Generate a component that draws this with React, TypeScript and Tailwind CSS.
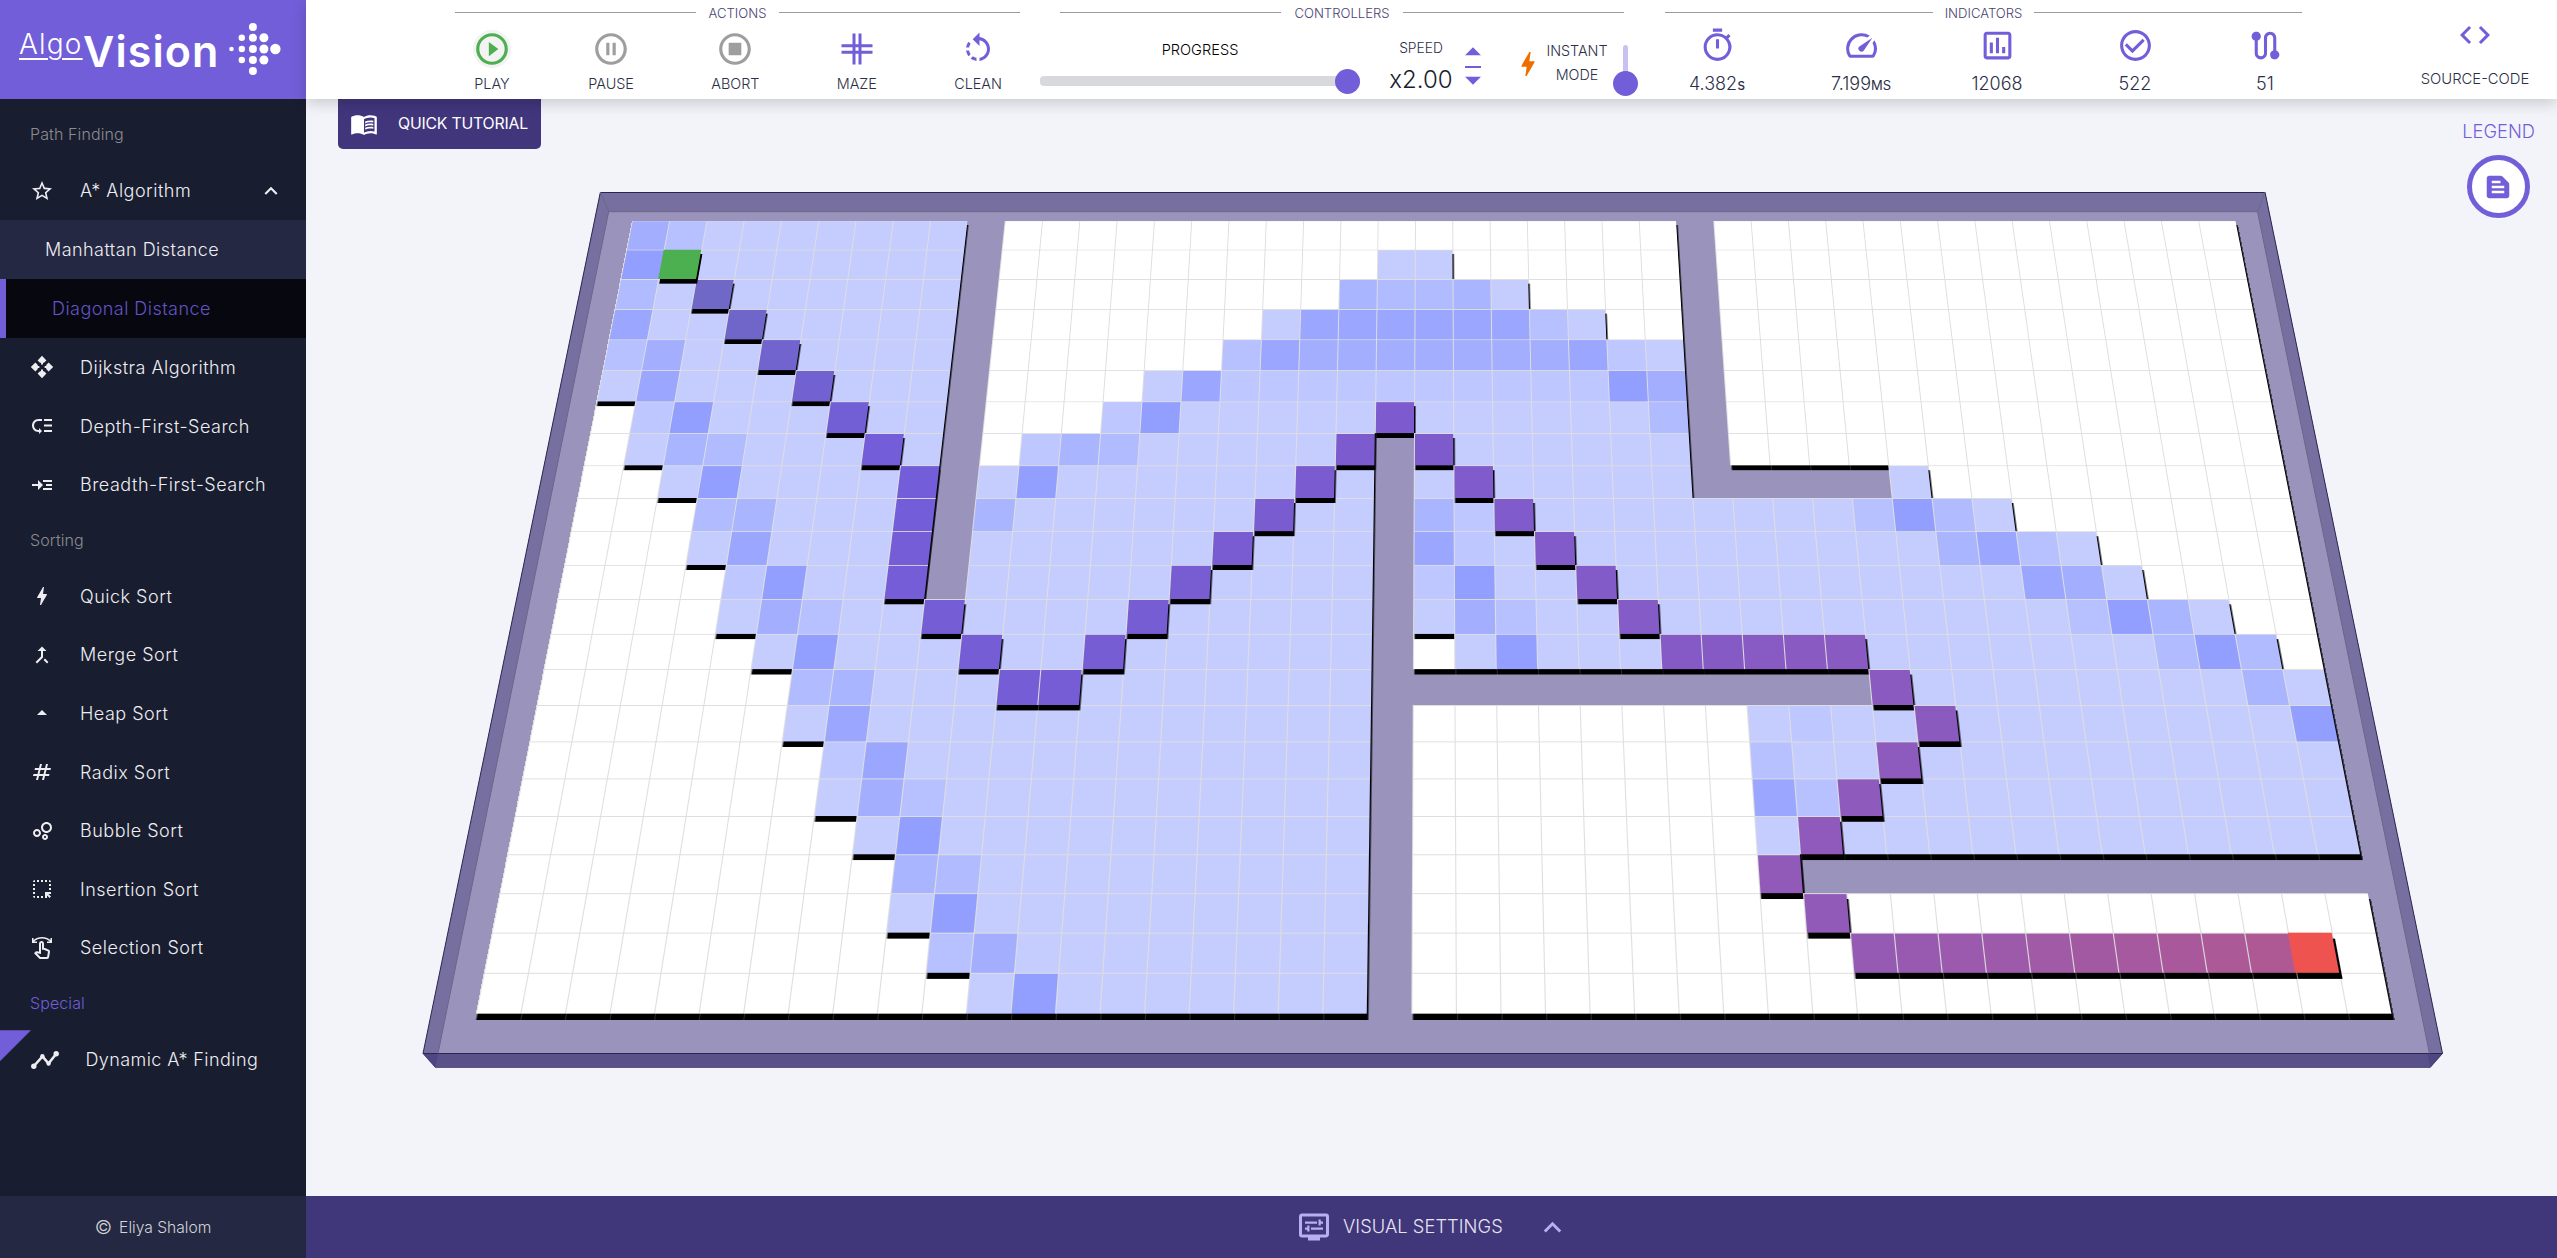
import type { CSSProperties, ReactNode } from "react";
import type { IconType } from "react-icons";
import {
  MdArrowDropDown,
  MdArrowDropUp,
  MdBolt,
  MdCallMerge,
  MdCheckCircleOutline,
  MdCode,
  MdExpandLess,
  MdHighlightAlt,
  MdLowPriority,
  MdMenuBook,
  MdNumbers,
  MdOutlineAssessment,
  MdOutlineBubbleChart,
  MdOutlineDisplaySettings,
  MdOutlineStopCircle,
  MdOutlineSwipe,
  MdOutlineTimer,
  MdPauseCircleOutline,
  MdPlayCircleOutline,
  MdReadMore,
  MdRotateLeft,
  MdRoute,
  MdSpeed,
  MdStarBorder,
  MdTextSnippet,
} from "react-icons/md";

/* ---------- board data ---------- */

// Each row is a run-length list: "#" wall, "." free, "a".."h" visited shades.
const ROWS = [
  "f1 c1 a7 #1 .18 #1 .14",
  "h1 a8 #1 .10 a2 .6 #1 .14",
  "d1 a8 #1 .9 e1 d2 e1 a1 .4 #1 .14",
  "g1 a8 #1 .7 a1 g6 c1 a1 .2 #1 .14",
  "c1 f1 a7 #1 .6 c1 g1 f7 g1 b1 a1 #1 .14",
  "a1 g1 a7 #1 .4 a1 g1 b10 h1 f1 #1 .14",
  ".1 b1 h1 a6 #1 .3 b1 h1 a12 d1 #1 .14",
  ".1 a1 e1 d1 a5 #1 .1 b1 e1 d1 a6 #1 a7 #1 .14",
  ".2 a1 h1 a5 #1 a1 h1 a8 #1 a7 #5 a1 .9",
  ".3 d1 e1 a4 #1 e1 a9 #1 e1 b1 a9 c1 h1 d1 a1 .7",
  ".3 a1 g1 a4 #1 a10 #1 g1 b1 a11 e1 g1 c1 a1 .5",
  ".4 b1 h1 a3 #1 a10 #1 b1 h1 a13 g1 f1 a1 .4",
  ".4 a1 f1 c1 a13 #1 a1 f1 c1 a13 c1 h1 e1 a1 .2",
  ".5 a1 h1 a13 #1 .1 a1 h1 a15 d1 h1 d1 .1",
  ".6 d1 e1 a12 #12 a9 e1 a1",
  ".6 a1 g1 a12 #1 .8 a1 b1 a11 h1",
  ".7 b1 g1 a11 #1 .8 c1 a13",
  ".7 a1 f1 c1 a10 #1 .8 g1 c1 a12",
  ".8 a1 h1 a10 #1 .8 a14",
  ".9 e1 d1 a9 #1 .8 a1 #13",
  ".9 a1 h1 a9 #1 .22",
  ".10 c1 f1 a8 #1 .22",
  ".11 a1 h1 a7 #1 .22",
];

const SHADES: Record<string, string> = {
  a: "bg-[#c5cdff]",
  b: "bg-[#bec7ff]",
  c: "bg-[#b8c1ff]",
  d: "bg-[#b1bbff]",
  e: "bg-[#aab5ff]",
  f: "bg-[#a3aeff]",
  g: "bg-[#9ba7ff]",
  h: "bg-[#929fff]",
};

const PATH: [number, number][] = [
  [2, 2], [3, 3], [4, 4], [5, 5], [6, 6], [7, 7], [8, 8], [9, 8], [10, 8], [11, 8],
  [12, 9], [13, 10], [14, 11], [14, 12], [13, 13], [12, 14], [11, 15], [10, 16],
  [9, 17], [8, 18], [7, 19], [6, 20], [7, 21], [8, 22], [9, 23], [10, 24], [11, 25],
  [12, 26], [13, 27], [13, 28], [13, 29], [13, 30], [13, 31], [14, 32], [15, 33],
  [16, 32], [17, 31], [18, 30], [19, 29], [20, 30], [21, 31], [21, 32], [21, 33],
  [21, 34], [21, 35], [21, 36], [21, 37], [21, 38], [21, 39], [21, 40],
];

const STOPS: [number, [number, number, number]][] = [
  [0, [111, 104, 198]],
  [5, [115, 93, 217]],
  [14, [118, 93, 212]],
  [21, [125, 91, 206]],
  [33, [138, 90, 192]],
  [39, [146, 90, 184]],
  [49, [175, 89, 148]],
];

function pathColor(i: number) {
  const k = Math.max(1, STOPS.findIndex(([s]) => s >= i));
  const [s0, c0] = STOPS[k - 1];
  const [s1, c1] = STOPS[k];
  const t = (i - s0) / (s1 - s0);
  return `rgb(${c0.map((v, j) => Math.round(v + (c1[j] - v) * t)).join(",")})`;
}

type Cell = { row: number; col: number; kind: string };

const CELLS: Cell[] = ROWS.flatMap((line, row) => {
  let col = 0;
  return line.split(" ").flatMap((run) =>
    Array.from({ length: Number(run.slice(1)) }, () => ({ row, col: col++, kind: run[0] }))
  );
});

const place = (row: number, col: number): CSSProperties => ({
  gridRow: row + 1,
  gridColumn: col + 1,
});

const CELL = "border-t border-l border-[#dedede] shadow-[1.5px_6px_0_0_#000]";

function Board() {
  const free = CELLS.filter((c) => c.kind === ".");
  const visited = CELLS.filter((c) => c.kind !== "." && c.kind !== "#");
  return (
    <div className="absolute inset-0 overflow-hidden">
      <svg className="absolute inset-0 h-full w-full" viewBox="0 0 2251 1097">
        <polygon points="294.3,93 1959.1,93 2136.5,954.5 117,954.5" fill="#776fa0" />
        <polygon points="302.7,112.7 1951.5,112.7 2123.5,954.5 132,954.5" fill="#9a94bc" />
        <polygon points="117,954.5 2136.5,954.5 2124.2,968.5 129.4,968.5" fill="#5a518b" />
        <polygon points="117,954.5 132,954.5 129.4,968.5" fill="#4e4583" />
        <polygon points="2136.5,954.5 2121.5,954.5 2124.2,968.5" fill="#4e4583" />
        <g fill="none" stroke="#2b2650">
          <path d="M117,954.5 L294.3,93.5 H1959.1 L2136.5,954.5" />
          <path d="M117,954.5 H2136.5" />
          <path d="M117,954.5 L129.4,968.5 H2124.2 L2136.5,954.5" strokeOpacity="0.6" />
          <path
            d="M294.3,93 L302.7,112.7 H1951.5 L1959.1,93 M302.7,112.7 L132,954.5 M1951.5,112.7 L2123.5,954.5"
            stroke="#6b6788"
          />
        </g>
      </svg>
      <div className="absolute top-0 left-0 grid origin-top-left grid-cols-[repeat(43,40px)] grid-rows-[repeat(23,40px)] [transform:matrix3d(0.93225,0,0,0,-0.1998,0.7,0,-0.00017715,0,0,1,0,325.9,121.6,0,1)]">
        {free.map((c) => (
          <div key={`f${c.row}-${c.col}`} className={`${CELL} bg-white`} style={place(c.row, c.col)} />
        ))}
        {visited.map((c) => (
          <div key={`v${c.row}-${c.col}`} className={`${CELL} ${SHADES[c.kind]}`} style={place(c.row, c.col)} />
        ))}
        {PATH.map(([r, c], i) => (
          <div
            key={`p${r}-${c}`}
            className={CELL}
            style={{ ...place(r, c), backgroundColor: pathColor(i) }}
          />
        ))}
        <div className="bg-[#4caf50] shadow-[2px_6px_0_0_#000]" style={place(1, 1)} />
        <div className="bg-[#ef5350] shadow-[2px_6px_0_0_#000]" style={place(21, 41)} />
      </div>
    </div>
  );
}

/* ---------- icons ---------- */

function DijkstraIcon() {
  return (
    <svg className="h-6 w-6" viewBox="0 0 24 24" fill="currentColor">
      <path d="M12 .8 16.4 5.4 14 7.8H13V9.4H11V7.8H10L7.6 5.4zM12 23.2 16.4 18.6 14 16.2H13V14.6H11V16.2H10L7.6 18.6zM.8 12 5.4 7.6 7.8 10V11H9.4V13H7.8V14L5.4 16.4zM23.2 12 18.6 7.6 16.2 10V11H14.6V13H16.2V14L18.6 16.4z" />
    </svg>
  );
}

function DynamicIcon() {
  return (
    <svg className="mr-[26px] h-[30px] w-[30px]" viewBox="0 0 30 30" fill="currentColor">
      <path d="M3.5 21.5 12.5 11.5 18.5 18.5 26.5 8.5" fill="none" stroke="currentColor" strokeWidth="2.6" />
      <circle cx="3.8" cy="21.3" r="2.7" />
      <circle cx="12.4" cy="11.3" r="2.2" />
      <circle cx="18.6" cy="18.6" r="2.2" />
      <circle cx="26.2" cy="8.8" r="2.7" />
    </svg>
  );
}

function MazeIcon() {
  return (
    <svg className="h-[38px] w-[38px]" viewBox="0 0 38 38" stroke="currentColor" strokeWidth="3">
      <path d="M3.5 15.8H34.5M3.5 22.2H34.5M16 3.5V34.5M22 3.5V34.5" />
    </svg>
  );
}

const DOTS = [
  [2.5, 28, 2.3], [12.8, 28, 3.2], [23.9, 28, 4], [34.9, 28, 4.5], [46.4, 28, 5.2],
  [12.8, 16.8, 3.2], [23.9, 16.8, 4], [34.9, 16.8, 4.5],
  [12.8, 39, 3.2], [23.9, 39, 4], [34.9, 39, 4.5],
  [23.9, 6, 4], [23.9, 50, 4],
];

function LogoMark() {
  return (
    <svg className="-mt-px h-[56px] w-[52px] shrink-0" viewBox="0 0 52 56" fill="#fff">
      {DOTS.map(([x, y, r]) => (
        <circle key={`${x}-${y}`} cx={x} cy={y} r={r} />
      ))}
    </svg>
  );
}

/* ---------- sidebar ---------- */

function NavHeading({ children, className }: { children: ReactNode; className: string }) {
  return <div className={`flex shrink-0 items-center pl-[30px] tracking-[0.1px] ${className}`}>{children}</div>;
}

function NavItem({ icon, label, trailing }: { icon: ReactNode; label: string; trailing?: ReactNode }) {
  return (
    <div className="flex h-[58.6px] shrink-0 items-center pl-[30px] text-[18px] tracking-[0.5px]">
      <span className="flex w-[50px] shrink-0 items-center">{icon}</span>
      <span className="flex-1">{label}</span>
      {trailing}
    </div>
  );
}

function Sidebar() {
  return (
    <aside className="flex w-[306px] shrink-0 flex-col bg-[#181d2f] text-[#eeeef2]">
      <div className="flex h-[99px] shrink-0 items-center bg-[#725ed9] pl-[19px] text-white">
        <span className="-mt-[11px] w-[64px] text-[28px] leading-none font-light tracking-[1.2px] underline decoration-2 underline-offset-[4px]">
          Algo
        </span>
        <span className="mt-1 w-[146px] text-[43px] leading-none font-semibold tracking-[1.1px]">Vision</span>
        <LogoMark />
      </div>
      <NavHeading className="mt-[9px] h-[53.6px] pb-px text-[#8b8c92]">Path Finding</NavHeading>
      <NavItem
        icon={<MdStarBorder size={24} />}
        label="A* Algorithm"
        trailing={<MdExpandLess size={26} className="mr-[22px]" />}
      />
      <div className="flex h-[59px] shrink-0 items-center bg-[#242842] pl-[45px] text-[18px] tracking-[0.45px]">
        Manhattan Distance
      </div>
      <div className="flex h-[59px] shrink-0 items-center border-l-[6px] border-[#725ed9] bg-[#07080f] pl-[46px] text-[18px] tracking-[0.45px] text-[#6553c7]">
        Diagonal Distance
      </div>
      <NavItem icon={<DijkstraIcon />} label="Dijkstra Algorithm" />
      <NavItem icon={<MdLowPriority size={24} />} label="Depth-First-Search" />
      <NavItem icon={<MdReadMore size={24} />} label="Breadth-First-Search" />
      <NavHeading className="h-[53px] pb-px text-[#8b8c92]">Sorting</NavHeading>
      <NavItem icon={<MdBolt size={24} />} label="Quick Sort" />
      <NavItem icon={<MdCallMerge size={24} />} label="Merge Sort" />
      <NavItem icon={<MdArrowDropUp size={24} />} label="Heap Sort" />
      <NavItem icon={<MdNumbers size={24} />} label="Radix Sort" />
      <NavItem icon={<MdOutlineBubbleChart size={24} />} label="Bubble Sort" />
      <NavItem icon={<MdHighlightAlt size={24} />} label="Insertion Sort" />
      <NavItem icon={<MdOutlineSwipe size={24} />} label="Selection Sort" />
      <NavHeading className="h-[53px] pb-px text-[#725ed9]">Special</NavHeading>
      <div className="relative flex h-[59px] shrink-0 items-center pl-[29.5px] text-[18px] tracking-[0.42px]">
        <div className="absolute top-0 left-0 h-[31px] w-[31px] bg-[#725ed9] [clip-path:polygon(0_0,100%_0,0_100%)]" />
        <DynamicIcon />
        Dynamic A* Finding
      </div>
      <div className="mt-auto flex h-[62px] shrink-0 items-center justify-center gap-[7px] bg-[#242842] pt-px text-[#d3d4d9]">
        <span className="text-[19px] leading-none">©</span>
        <span className="text-[15.6px]">Eliya Shalom</span>
      </div>
    </aside>
  );
}

/* ---------- toolbar ---------- */

function GroupTitle({ children, gap }: { children: string; gap: string }) {
  return (
    <div className={`flex h-[25px] items-center text-[13.1px] text-[#4a4373] ${gap}`}>
      <span className="h-px flex-1 bg-[#9b9b9b]" />
      <span className="mt-[2px]">{children}</span>
      <span className="h-px flex-1 bg-[#9b9b9b]" />
    </div>
  );
}

function Action({ icon, label, color }: { icon: ReactNode; label: string; color: string }) {
  return (
    <div className="flex min-w-[38px] flex-col items-center">
      <span className={`flex h-[38px] w-[38px] items-center justify-center rounded-full ${color}`}>{icon}</span>
      <span className="mt-[6px] text-[14.4px] leading-5">{label}</span>
    </div>
  );
}

function Indicator({ icon: Icon, value, unit, width }: { icon: IconType; value: string; unit?: ReactNode; width: string }) {
  return (
    <div className={`flex flex-col items-center ${width}`}>
      <Icon size={37} className="text-[#725ed9]" />
      <span className="mt-[8px] text-[18px] leading-6">
        {value}
        {unit}
      </span>
    </div>
  );
}

function Toolbar() {
  return (
    <header className="relative z-10 flex h-[99px] shrink-0 bg-white text-[#2b2f48] shadow-[0_4px_14px_rgba(0,0,0,0.18)]">
      <section className="ml-[149px] w-[565px]">
        <GroupTitle gap="gap-[13px]">ACTIONS</GroupTitle>
        <div className="mt-[5px] flex justify-between pr-[18px] pl-[18px]">
          <Action color="bg-[#f3f3f3] text-[#4caf50]" icon={<MdPlayCircleOutline size={38} />} label="PLAY" />
          <Action color="text-[#9e9e9e]" icon={<MdPauseCircleOutline size={38} />} label="PAUSE" />
          <Action color="text-[#9e9e9e]" icon={<MdOutlineStopCircle size={38} />} label="ABORT" />
          <Action color="text-[#725ed9]" icon={<MazeIcon />} label="MAZE" />
          <Action color="text-[#725ed9]" icon={<MdRotateLeft size={36} />} label="CLEAN" />
        </div>
      </section>

      <section className="ml-[19px] w-[600px]">
        <div className="pr-[15px] pl-[21px]">
          <GroupTitle gap="gap-[13px]">CONTROLLERS</GroupTitle>
        </div>
        <div className="flex h-[74px] pt-px">
          <div className="relative w-[321px] shrink-0 pt-[14px] text-center text-[14.6px] leading-5 text-black">
            <span className="ml-[1px]">PROGRESS</span>
            <div className="mt-[16px] ml-px h-[10px] rounded-[4px] bg-[#d8d9dd]" />
            <div className="absolute top-[42.5px] left-[296px] h-[25px] w-[25px] rounded-full bg-[#725ed9]" />
          </div>
          <div className="ml-[28px] w-[66px] shrink-0 pt-[12px] text-center">
            <div className="text-[13.8px] leading-5">SPEED</div>
            <div className="text-[24px] leading-[44px] text-[#181d2f]">x2.00</div>
          </div>
          <div className="ml-[7px] flex w-[24px] shrink-0 flex-col items-center text-[#725ed9]">
            <MdArrowDropUp size={38} className="mt-[7px] shrink-0" />
            <div className="-mt-[5px] h-[2px] w-[16px] shrink-0 bg-[#725ed9]" />
            <MdArrowDropDown size={38} className="-mt-[7px] shrink-0" />
          </div>
          <MdBolt size={32} className="mt-[22px] ml-[27px] shrink-0 text-[#ef6c00]" />
          <div className="ml-[-2px] w-[70px] shrink-0 pt-[13px] text-center text-[14.3px] leading-[24px]">
            INSTANT
            <br />
            MODE
          </div>
          <div className="relative ml-[1px] w-[25px] shrink-0">
            <div className="absolute top-[19px] left-[10px] h-[45px] w-[5px] rounded-full bg-[#c9c2f1]" />
            <div className="absolute top-[45px] left-0 h-[25px] w-[25px] rounded-full bg-[#725ed9]" />
          </div>
        </div>
      </section>

      <section className="ml-[6px] w-[676px]">
        <div className="pr-[19px] pl-[20px]">
          <GroupTitle gap="gap-[12px]">INDICATORS</GroupTitle>
        </div>
        <div className="mt-[2px] flex">
          <Indicator
            width="w-[144px]"
            icon={MdOutlineTimer}
            value="4.382"
            unit={<span className="text-[15px] font-normal">s</span>}
          />
          <Indicator
            width="w-[144px]"
            icon={MdSpeed}
            value="7.199"
            unit={<span className="text-[13px] font-normal">MS</span>}
          />
          <Indicator width="w-[128px]" icon={MdOutlineAssessment} value="12068" />
          <Indicator width="w-[148px]" icon={MdCheckCircleOutline} value="522" />
          <Indicator width="w-[112px]" icon={MdRoute} value="51" />
        </div>
      </section>

      <div className="ml-[94px] flex w-[120px] flex-col items-center pt-[17px]">
        <MdCode size={36} className="text-[#725ed9]" />
        <span className="mt-[16px] text-[14.8px] leading-5">SOURCE-CODE</span>
      </div>
    </header>
  );
}

/* ---------- page ---------- */

export default function App() {
  return (
    <div className="flex h-[1258px] w-[2557px] overflow-hidden font-[Inter,sans-serif] text-[16px] font-light">
      <Sidebar />
      <div className="flex flex-1 flex-col">
        <Toolbar />
        <main className="relative flex flex-1 items-start justify-between overflow-hidden bg-[#f3f4fa]">
          <Board />
          <button className="relative ml-8 flex h-[50px] w-[203px] items-center gap-[20px] rounded-b-[5px] bg-[#41367c] pl-[12px] text-[15.8px] font-normal tracking-[-0.2px] whitespace-nowrap text-white">
            <MdMenuBook size={28} className="shrink-0" />
            QUICK TUTORIAL
          </button>
          <div className="relative mr-[22px] flex flex-col items-center text-[#725ed9]">
            <span className="mt-[19px] text-[18.3px] leading-[26px]">LEGEND</span>
            <span className="mt-[11px] mr-px flex h-[63px] w-[63px] items-center justify-center rounded-full border-[5px] border-[#725ed9] bg-white">
              <MdTextSnippet size={30} />
            </span>
          </div>
        </main>
        <footer className="flex h-[62px] shrink-0 items-center bg-[#40367a] pl-[990px] text-[18.3px] text-[#e6e4f0]">
          <MdOutlineDisplaySettings size={36} className="mr-[11px] text-[#b9aef0]" />
          <span className="tracking-[0.05px]">VISUAL SETTINGS</span>
          <MdExpandLess size={35} className="ml-[32px] text-[#b9aef0]" />
        </footer>
      </div>
    </div>
  );
}
